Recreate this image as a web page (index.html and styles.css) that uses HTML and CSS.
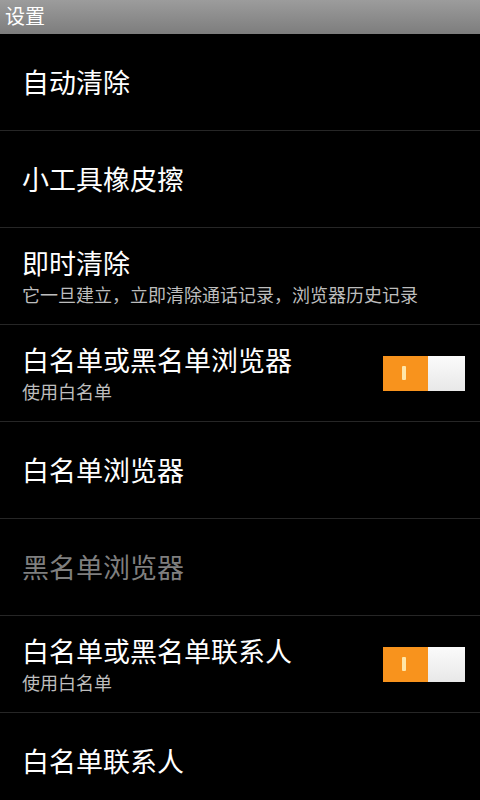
FILE: index.html
```html
<!DOCTYPE html>
<html lang="zh-CN">
<head>
<meta charset="utf-8">
<link rel="stylesheet" href="styles.css">
</head>
<body>
<div class="titlebar">设置</div>
<div class="list">
  <div class="row"><div class="text"><div class="title">自动清除</div></div></div>
  <div class="row"><div class="text"><div class="title">小工具橡皮擦</div></div></div>
  <div class="row"><div class="text"><div class="title">即时清除</div><div class="summary">它一旦建立，立即清除通话记录，浏览器历史记录</div></div></div>
  <div class="row"><div class="text"><div class="title">白名单或黑名单浏览器</div><div class="summary">使用白名单</div></div><div class="toggle"><div class="on"><span class="mark"></span></div><div class="off"></div></div></div>
  <div class="row"><div class="text"><div class="title">白名单浏览器</div></div></div>
  <div class="row"><div class="text"><div class="title disabled">黑名单浏览器</div></div></div>
  <div class="row"><div class="text"><div class="title">白名单或黑名单联系人</div><div class="summary">使用白名单</div></div><div class="toggle"><div class="on"><span class="mark"></span></div><div class="off"></div></div></div>
  <div class="row"><div class="text"><div class="title">白名单联系人</div></div></div>
</div>
</body>
</html>
```
FILE: styles.css
```css
html, body {
  margin: 0;
  padding: 0;
  background: #000;
  width: 480px;
  height: 800px;
  overflow: hidden;
  font-family: "Noto Sans CJK SC", "Noto Sans", sans-serif;
}
.titlebar {
  height: 34px;
  box-sizing: border-box;
  padding-left: 5px;
  background: linear-gradient(#9c9c9c, #7d7d7d);
  color: #fff;
  font-size: 20px;
  line-height: 31px;
}
.list {
  display: flex;
  flex-direction: column;
}
.row {
  height: 96px;
  flex: none;
  border-bottom: 1px solid #262626;
  display: flex;
  align-items: center;
  padding: 0 15px 0 22px;
}
.text {
  flex: 1;
  display: flex;
  flex-direction: column;
}
.title {
  color: #fff;
  font-size: 27px;
  line-height: 32px;
}
.title.disabled {
  color: #7f7f7f;
}
.summary {
  color: #bdbdbd;
  font-size: 18px;
  line-height: 24px;
  margin-top: 3px;
}
.toggle {
  width: 82px;
  height: 35px;
  display: flex;
  flex: none;
}
.toggle .on {
  width: 45px;
  background: #f8931d;
  display: flex;
  align-items: center;
  justify-content: center;
  padding-right: 4px;
  box-sizing: border-box;
}
.toggle .mark {
  width: 4px;
  height: 14px;
  background: #ffe6a8;
  border-radius: 1px;
}
.toggle .off {
  flex: 1;
  background: linear-gradient(#fbfbfb, #e8e8e8);
}
```
